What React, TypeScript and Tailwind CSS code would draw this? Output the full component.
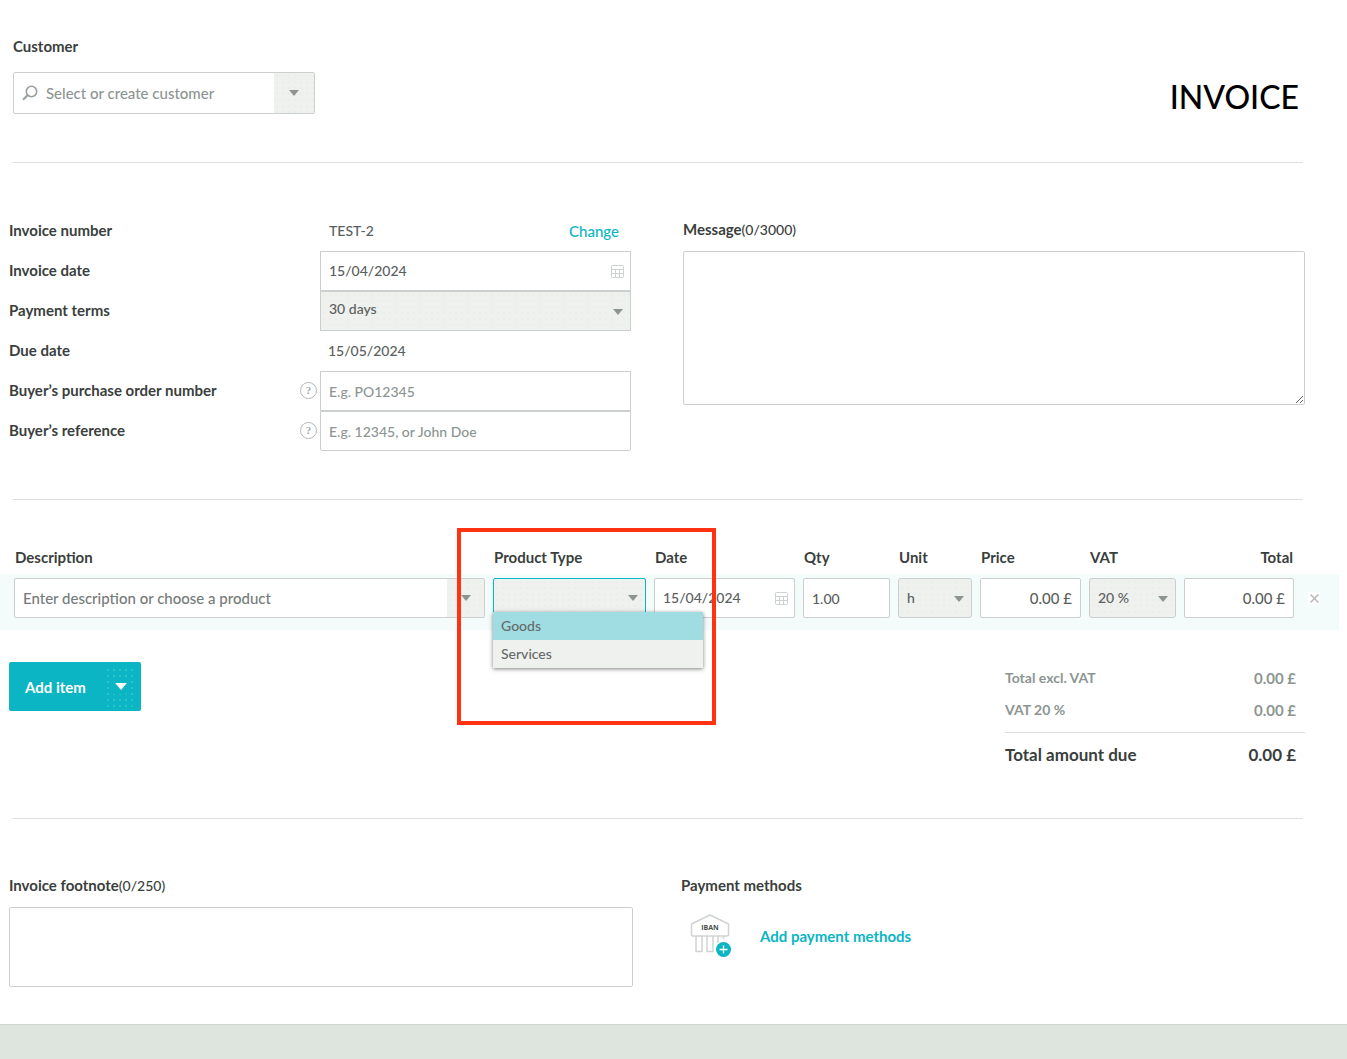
import React from 'react';

const dots = 'bg-[#eff1ee] bg-[radial-gradient(#eaedea_1px,transparent_1px)] bg-[size:6px_6px]';
const control = 'border border-[#cbcfcd] bg-white text-[#5a605e] outline-none';

const Caret: React.FC<{ className?: string }> = ({ className = '' }) => (
  <svg width="10" height="6" viewBox="0 0 10 6" aria-hidden="true" className={`fill-current ${className}`}>
    <path d="M0 0h10L5 6z" />
  </svg>
);

const CalendarIcon = () => (
  <svg width="13" height="13" viewBox="0 0 13 13" fill="none" stroke="#cdd1cf" aria-hidden="true">
    <rect x=".5" y=".5" width="12" height="12" rx="1" />
    <path d="M.5 4.500h12M.5 8.500h12M4.500 4.500v8M8.500 4.500v8" />
  </svg>
);

const SearchIcon = () => (
  <svg width="16" height="16" viewBox="0 0 16 16" fill="none" stroke="#98a09d" strokeWidth="1.600" className="shrink-0" aria-hidden="true">
    <circle cx="9.500" cy="6.500" r="5.200" />
    <path d="M5.600 10.200 1 14.800" strokeWidth="2" />
  </svg>
);

const BankIcon = () => (
  <svg width="42" height="44" viewBox="0 0 42 44" fill="none" aria-hidden="true">
    <g stroke="#cfd3d1" strokeWidth="1.500">
      <path d="M1.500 10 20 1l18.500 9v11a1 1 0 0 1-1 1h-35a1 1 0 0 1-1-1z" strokeLinejoin="round" />
      <path d="M6 22v15.500h6V22M17 22v15.500h6V22M28 22v7M33.500 22v3" />
    </g>
    <text x="20" y="16" textAnchor="middle" fontFamily="Open Sans, sans-serif" fontSize="7" fontWeight="700" fill="#4a504e">IBAN</text>
    <circle cx="33.500" cy="35.500" r="7.500" fill="#0bb5c4" />
    <path d="M33.500 31.500v8M29.500 35.500h8" stroke="#fff" strokeWidth="1.300" />
  </svg>
);

const Help: React.FC<{ label: string }> = ({ label }) => (
  <button
    type="button"
    aria-label={label}
    className="mr-[3px] mb-0.5 flex size-[17px] items-center justify-center rounded-full border border-[#b3b9b6] font-['Liberation_Serif',serif] text-[11px] leading-none font-bold text-[#a3aaa7]"
  >
    ?
  </button>
);

interface FieldProps {
  label: string;
  id?: string;
  help?: string;
  children: React.ReactNode;
}

const Field: React.FC<FieldProps> = ({ label, id, help, children }) => (
  <div className="flex h-10 items-center">
    <label htmlFor={id} className="flex-1 pb-0.5 font-bold text-[#3a3f3d]">{label}</label>
    {help && <Help label={help} />}
    <div className="flex h-full w-1/2 items-center">{children}</div>
  </div>
);

interface DateInputProps {
  id?: string;
  label?: string;
  className?: string;
}

const DateInput: React.FC<DateInputProps> = ({ id, label, className = '' }) => (
  <div className={`flex h-10 w-full items-center pr-1.5 ${control} ${className}`}>
    <input id={id} aria-label={label} defaultValue="15/04/2024" className="w-full min-w-0 flex-1 pl-2 text-sm font-medium outline-none" />
    <CalendarIcon />
  </div>
);

interface PickerProps {
  id?: string;
  label?: string;
  value: string;
  className?: string;
}

const Picker: React.FC<PickerProps> = ({ id, label, value, className = '' }) => (
  <div className="relative w-full">
    <select id={id} aria-label={label} className={`block h-10 w-full appearance-none border border-[#cbcfcd] px-2 text-sm font-medium text-[#5a605e] outline-none ${dots} ${className}`}>
      <option>{value}</option>
    </select>
    <Caret className="pointer-events-none absolute top-[18px] right-2 text-[#8d9592]" />
  </div>
);

const Divider = () => <hr className="mr-11 ml-[13px] border-[#dcdfdd]" />;

const ProductType = () => (
  <div className="relative">
    <button
      type="button"
      aria-label="Product Type"
      aria-haspopup="listbox"
      aria-expanded="true"
      className={`flex h-10 w-full items-center justify-end rounded-t-[2px] border border-[#0bb5c4] pr-[7px] ${dots}`}
    >
      <Caret className="text-[#8d9592]" />
    </button>
    <ul role="listbox" aria-label="Product Type" className="absolute top-[34px] left-0 z-10 w-[210px] bg-[#eff1ee] text-sm leading-7 font-medium text-[#666b69] shadow-[0_1px_4px_rgba(0,0,0,0.5)]">
      <li role="option" aria-selected="true" className="h-7 bg-[#9fdde2] px-2">Goods</li>
      <li role="option" aria-selected="false" className="h-7 px-2">Services</li>
    </ul>
    {/* Highlight frame around the product type column */}
    <div className="pointer-events-none absolute -top-[50px] -left-9 z-20 h-[197px] w-[259px] border-4 border-[#ff3311]" />
  </div>
);

export default function App() {
  return (
    <div className="flex min-h-screen flex-col bg-white font-['Lato','Liberation_Sans',sans-serif] text-[15px] leading-5 font-medium text-[#5a605e]">
      <main>
        <header className="flex items-start justify-between pt-9 pr-12 pb-[45px] pl-[13px]">
          <div>
            <label htmlFor="customer" className="block font-bold text-[#3a3f3d]">Customer</label>
            <div className={`mt-4 flex h-[42px] w-[302px] items-center rounded-[2px] ${control}`}>
              <div className="flex flex-1 items-center gap-2 pl-2">
                <SearchIcon />
                <input id="customer" placeholder="Select or create customer" className="w-full outline-none placeholder:text-[#8d9592]" />
              </div>
              <button type="button" aria-label="Show customers" className={`flex h-full w-10 items-center justify-center text-[#8d9592] ${dots}`}>
                <Caret />
              </button>
            </div>
          </div>
          <h1 className="mt-[41px] text-[32px] leading-10 font-medium text-black">INVOICE</h1>
        </header>

        <Divider />

        <section className="grid grid-cols-2 gap-[52px] pt-12 pr-[42px] pb-12 pl-[9px]">
          <div>
            <Field label="Invoice number">
              <span className="flex-1 pl-[9px] text-sm">TEST-2</span>
              <a href="#change" className="pr-3 text-[#0bb5c4]">Change</a>
            </Field>
            <Field label="Invoice date" id="invoice-date">
              <DateInput id="invoice-date" />
            </Field>
            <Field label="Payment terms" id="terms">
              <Picker id="terms" value="30 days" className="pb-1" />
            </Field>
            <Field label="Due date">
              <span className="pl-2 text-sm">15/05/2024</span>
            </Field>
            <Field label="Buyer’s purchase order number" id="po" help="About purchase order number">
              <input id="po" placeholder="E.g. PO12345" className={`h-full w-full px-2 text-sm placeholder:text-[#8d9592] ${control}`} />
            </Field>
            <Field label="Buyer’s reference" id="reference" help="About buyer’s reference">
              <input id="reference" placeholder="E.g. 12345, or John Doe" className={`h-full w-full rounded-b-[2px] px-2 text-sm placeholder:text-[#8d9592] ${control}`} />
            </Field>
          </div>
          <div className="pt-2">
            <label htmlFor="message" className="block text-sm leading-5 text-[#3a3f3d]">
              <span className="text-[15px] font-bold">Message</span>(0/3000)
            </label>
            <textarea id="message" className={`mt-[11px] block h-[154px] w-full rounded-[2px] p-2 ${control}`} />
          </div>
        </section>

        <Divider />

        <section className="pt-[47px] pr-2">
          <table className="w-full table-fixed">
            <colgroup>
              <col />
              <col className="w-[161px]" />
              <col className="w-[149px]" />
              <col className="w-[95px]" />
              <col className="w-[82px]" />
              <col className="w-[109px]" />
              <col className="w-[95px]" />
              <col className="w-[118px]" />
              <col className="w-[41px]" />
            </colgroup>
            <thead>
              <tr className="text-left text-[#3a3f3d] [&>th]:h-[27px] [&>th]:px-[5px] [&>th]:pb-[7px] [&>th]:font-bold">
                <th className="pl-[15px]!">Description</th>
                <th>Product Type</th>
                <th>Date</th>
                <th>Qty</th>
                <th>Unit</th>
                <th>Price</th>
                <th>VAT</th>
                <th className="text-right">Total</th>
                <th aria-label="Remove" />
              </tr>
            </thead>
            <tbody>
              <tr className="bg-[#f3fcfb] [&>td]:px-1 [&>td]:pt-1 [&>td]:pb-3">
                <td className="pl-3.5!">
                  <div className={`flex h-10 rounded-[2px] ${control}`}>
                    <input aria-label="Description" placeholder="Enter description or choose a product" className="min-w-0 flex-1 pl-2 outline-none placeholder:text-[#757b79]" />
                    <button type="button" aria-label="Show products" className={`flex w-[37px] items-center justify-center text-[#8d9592] ${dots}`}>
                      <Caret />
                    </button>
                  </div>
                </td>
                <td><ProductType /></td>
                <td><DateInput label="Date" className="rounded-[2px]" /></td>
                <td>
                  <input aria-label="Qty" defaultValue="1.00" className={`block h-10 w-full rounded-[2px] px-2 text-sm ${control}`} />
                </td>
                <td><Picker label="Unit" value="h" className="rounded-[3px]" /></td>
                <td>
                  <input aria-label="Price" defaultValue="0.00 £" className={`block h-10 w-full rounded-[2px] px-2 text-right ${control}`} />
                </td>
                <td><Picker label="VAT" value="20 %" className="rounded-[3px]" /></td>
                <td>
                  <input aria-label="Total" defaultValue="0.00 £" className={`block h-10 w-full rounded-[2px] px-2 text-right ${control}`} />
                </td>
                <td>
                  <button type="button" aria-label="Remove item" className="ml-1.5 flex size-3 items-center justify-center bg-white">
                    <svg width="9" height="9" viewBox="0 0 9 9" stroke="#b4bab7" strokeWidth="1.500" aria-hidden="true">
                      <path d="m.5.5 8 8m0-8-8 8" />
                    </svg>
                  </button>
                </td>
              </tr>
            </tbody>
          </table>
        </section>

        <section className="flex items-start justify-between pt-8 pr-[42px] pb-[42px] pl-[9px]">
          <button type="button" className="flex h-[49px] w-[132px] items-center rounded-[2px] bg-[#0bb5c4] pr-1 pl-4 font-bold text-white">
            <span className="flex-1 text-left">Add item</span>
            <span className="flex h-10 w-8 items-center justify-center bg-[radial-gradient(#2fc0cd_1px,transparent_1px)] bg-[size:6px_6px]">
              <span className="bg-[#0bb5c4] p-1">
                <Caret className="h-[7px] w-3" />
              </span>
            </span>
          </button>
          <dl className="w-[300px] font-bold text-[#8d9592]">
            <div className="flex h-8 items-center justify-between pr-[9px]">
              <dt className="text-sm">Total excl. VAT</dt>
              <dd>0.00 £</dd>
            </div>
            <div className="flex h-8 items-center justify-between pr-[9px]">
              <dt className="text-sm">VAT 20 %</dt>
              <dd>0.00 £</dd>
            </div>
            <div className="mt-1.5 flex h-11 items-center justify-between border-t border-[#dcdfdd] pr-[9px] text-[17px] text-[#3a3f3d]">
              <dt>Total amount due</dt>
              <dd>0.00 £</dd>
            </div>
          </dl>
        </section>

        <Divider />

        <section className="grid grid-cols-2 gap-12 pt-14 pr-[42px] pb-[37px] pl-[9px]">
          <div>
            <label htmlFor="footnote" className="block text-sm leading-5 text-[#3a3f3d]">
              <span className="text-[15px] font-bold">Invoice footnote</span>(0/250)
            </label>
            <textarea id="footnote" className={`mt-[11px] block h-20 w-full resize-none rounded-[2px] p-2 ${control}`} />
          </div>
          <div>
            <h2 className="font-bold text-[#3a3f3d]">Payment methods</h2>
            <div className="mt-[19px] ml-[9px] flex items-center gap-7">
              <BankIcon />
              <a href="#payment-methods" className="font-bold text-[#0bb5c4]">Add payment methods</a>
            </div>
          </div>
        </section>
      </main>
      <footer className="min-h-8 flex-1 border-t border-[#cfd5d0] bg-[#dee4de]" />
    </div>
  );
}
